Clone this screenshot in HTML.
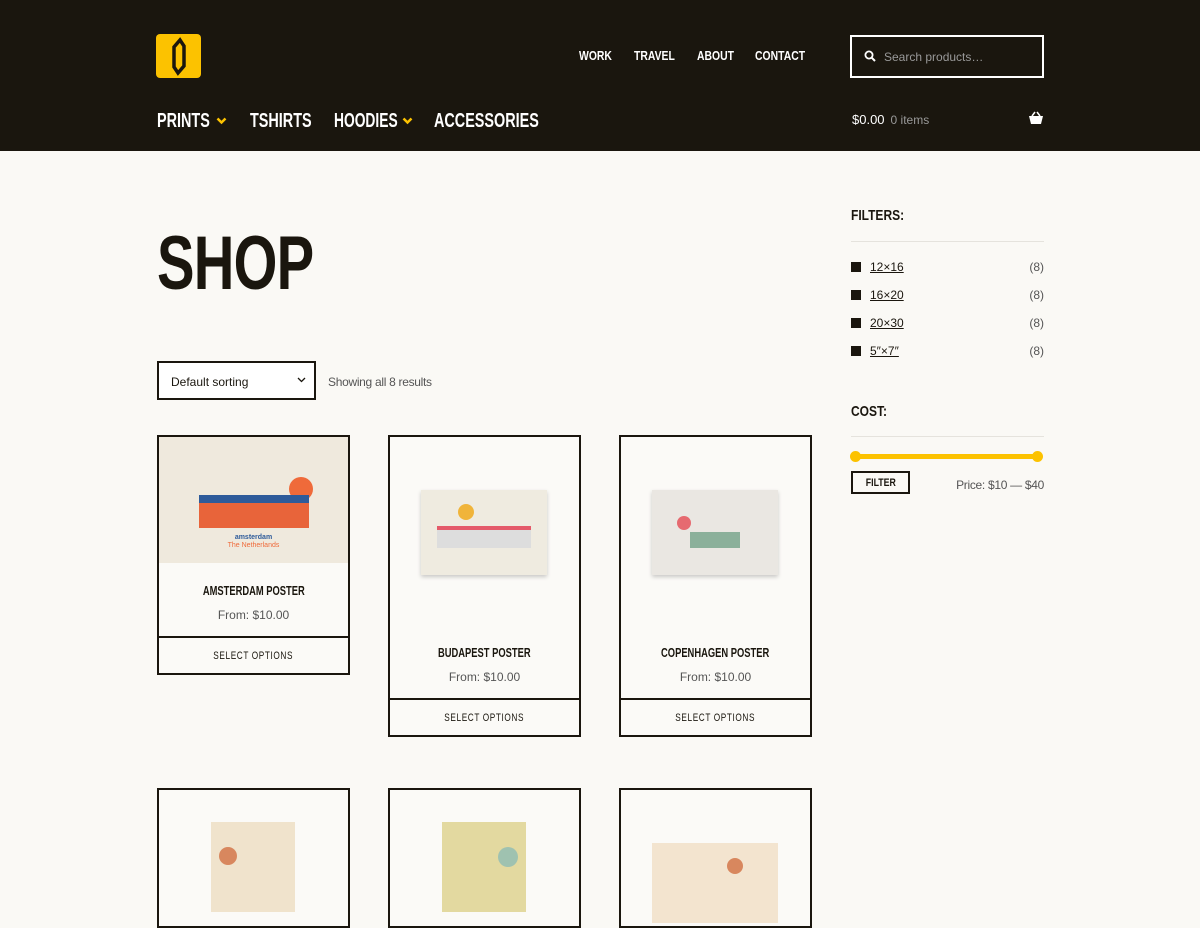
<!DOCTYPE html>
<html><head><meta charset="utf-8"><style>
*{box-sizing:border-box;margin:0;padding:0}
body{width:1200px;height:900px;overflow:hidden;background:#faf9f5;font-family:"Liberation Sans",sans-serif;color:#1a160e}
.c{font-weight:bold;display:inline-block;transform:scaleX(.72);transform-origin:left center;white-space:nowrap}
.cc{font-weight:bold;display:inline-block;transform:scaleX(.72);transform-origin:center center;white-space:nowrap}
header{position:absolute;left:0;top:0;width:1200px;height:151px;background:#1a160e}
.logo{position:absolute;left:156px;top:34px;width:45px;height:44px;background:#fcc200;border-radius:4px}
.top{position:absolute;top:48px;color:#fff;font-size:13px;transform:scaleX(.8);transform-origin:left center;white-space:nowrap}
.search{position:absolute;left:850px;top:35px;width:194px;height:43px;border:2px solid #fff;background:#1a160e;color:#999;font-size:12px;padding:13px 0 0 32px}
.nav{position:absolute;top:110px;color:#fff;font-size:20px}
.chev{position:absolute;top:117px}
.cart{position:absolute;left:852px;top:112px;color:#fff;font-size:13px}
.cart small{color:#999;font-size:12px;margin-left:6px}
h1{position:absolute;left:157px;top:226px;font-size:76px;letter-spacing:-1px;line-height:1}
.sort{position:absolute;left:157px;top:361px;width:159px;height:39px;border:2px solid #1a160e;font-size:12px;padding:12px 0 0 12px;background:#fff}
.res{position:absolute;left:328px;top:375px;font-size:12px;color:#555;letter-spacing:-0.3px}
.card{position:absolute;width:193px;border:2px solid #1a160e;background:#fbfaf7}
.card .t{position:absolute;left:0;right:0;text-align:center;font-size:13px}
.card .p{position:absolute;left:0;right:0;text-align:center;font-size:12px;color:#555}
.card .b{position:absolute;left:-2px;right:-2px;bottom:-2px;height:39px;border:2px solid #1a160e;text-align:center;font-size:11px;padding-top:12px;letter-spacing:0.8px}
.card .b span{display:inline-block;transform:scaleX(.75);white-space:nowrap}
.side h3{position:absolute;left:851px;font-size:15px;transform:scaleX(.8);transform-origin:left}
.line{position:absolute;left:851px;width:193px;height:1px;background:#e5e3dd}
.f{position:absolute;left:851px;width:193px;font-size:12px}
.f i{display:inline-block;width:10px;height:10px;background:#1a160e;margin-right:9px;vertical-align:-1px}
.f u{text-decoration:underline}
.f b{float:right;font-weight:normal;color:#555}
</style></head><body>
<header>
<div class="logo"><svg width="45" height="44" viewBox="0 0 45 44"><path d="M18 13 L24 6 L28 12 L28 32 L22 39 L18 33 Z" fill="none" stroke="#1a160e" stroke-width="3.5"/></svg></div>
<div class="top" style="left:579px;font-weight:bold">WORK</div>
<div class="top" style="left:634px;font-weight:bold">TRAVEL</div>
<div class="top" style="left:697px;font-weight:bold">ABOUT</div>
<div class="top" style="left:755px;font-weight:bold">CONTACT</div>
<div class="search"><svg style="position:absolute;left:12px;top:13px" width="12" height="12" viewBox="0 0 12 12"><circle cx="5" cy="5" r="3.6" fill="none" stroke="#fff" stroke-width="1.8"/><path d="M7.6 7.6L11 11" stroke="#fff" stroke-width="2"/></svg>Search products…</div>
<div class="nav" style="left:157px"><span class="c">PRINTS</span></div>
<svg class="chev" style="left:216px" width="11" height="8" viewBox="0 0 11 8"><path d="M1.5 1.5L5.5 5.5L9.5 1.5" fill="none" stroke="#fcc200" stroke-width="2.5"/></svg>
<div class="nav" style="left:250px"><span class="c">TSHIRTS</span></div>
<div class="nav" style="left:334px"><span class="c" style="transform:scaleX(.69)">HOODIES</span></div>
<svg class="chev" style="left:402px" width="11" height="8" viewBox="0 0 11 8"><path d="M1.5 1.5L5.5 5.5L9.5 1.5" fill="none" stroke="#fcc200" stroke-width="2.5"/></svg>
<div class="nav" style="left:434px"><span class="c">ACCESSORIES</span></div>
<div class="cart">$0.00<small>0 items</small></div>
<svg style="position:absolute;left:1028px;top:111px" width="16" height="14" viewBox="0 0 16 14"><path d="M1 5H15L13 13H3Z" fill="#fff"/><path d="M4 5L7 1M12 5L9 1" stroke="#fff" stroke-width="1.5"/></svg>
</header>
<h1><span class="c" style="transform:scaleX(.74)">SHOP</span></h1>
<div class="sort">Default sorting<svg style="position:absolute;right:8px;top:14px" width="9" height="6" viewBox="0 0 9 6"><path d="M1 1L4.5 4.5L8 1" fill="none" stroke="#1a160e" stroke-width="1.3"/></svg></div>
<div class="res">Showing all 8 results</div>

<div class="card" style="left:157px;top:435px;height:240px">
<div style="position:absolute;left:0;top:0;width:189px;height:126px;background:#efe9dd">
<div style="position:absolute;left:130px;top:40px;width:24px;height:24px;border-radius:50%;background:#ef6a3a"></div>
<div style="position:absolute;left:40px;top:63px;width:110px;height:28px;background:#e8643a"></div>
<div style="position:absolute;left:40px;top:58px;width:110px;height:8px;background:#2e5b9a"></div>
<div style="position:absolute;left:0;right:0;top:97px;text-align:center;font-size:7px;color:#2e5b9a;font-weight:bold">amsterdam</div>
<div style="position:absolute;left:0;right:0;top:105px;text-align:center;font-size:7px;color:#ef6a3a">The Netherlands</div>
</div>
<div class="t" style="top:146px"><span class="cc">AMSTERDAM POSTER</span></div><div class="p" style="top:171px">From: $10.00</div>
<div class="b"><span>SELECT OPTIONS</span></div></div>

<div class="card" style="left:388px;top:435px;height:302px">
<div style="position:absolute;left:31px;top:53px;width:126px;height:85px;background:#efebe0;box-shadow:0 2px 4px rgba(0,0,0,.2)">
<div style="position:absolute;left:37px;top:14px;width:16px;height:16px;border-radius:50%;background:#f0b43a"></div>
<div style="position:absolute;left:16px;top:36px;width:94px;height:22px;background:#ddd;border-top:4px solid #e45a6a"></div></div>
<div class="t" style="top:208px"><span class="cc">BUDAPEST POSTER</span></div><div class="p" style="top:233px">From: $10.00</div>
<div class="b"><span>SELECT OPTIONS</span></div></div>

<div class="card" style="left:619px;top:435px;height:302px">
<div style="position:absolute;left:31px;top:53px;width:126px;height:85px;background:#eae7e2;box-shadow:0 2px 4px rgba(0,0,0,.2)">
<div style="position:absolute;left:25px;top:26px;width:14px;height:14px;border-radius:50%;background:#e66a70"></div>
<div style="position:absolute;left:38px;top:42px;width:50px;height:16px;background:#8bb09a"></div></div>
<div class="t" style="top:208px"><span class="cc">COPENHAGEN POSTER</span></div><div class="p" style="top:233px">From: $10.00</div>
<div class="b"><span>SELECT OPTIONS</span></div></div>

<div class="card" style="left:157px;top:788px;height:140px"><div style="position:absolute;left:52px;top:32px;width:84px;height:90px;background:#f0e3cc"><div style="position:absolute;left:8px;top:25px;width:18px;height:18px;border-radius:50%;background:#d8875e"></div></div></div>
<div class="card" style="left:388px;top:788px;height:140px"><div style="position:absolute;left:52px;top:32px;width:84px;height:90px;background:#e3d9a0"><div style="position:absolute;left:56px;top:25px;width:20px;height:20px;border-radius:50%;background:#9fc2b0"></div></div></div>
<div class="card" style="left:619px;top:788px;height:140px"><div style="position:absolute;left:31px;top:53px;width:126px;height:80px;background:#f3e4cf"><div style="position:absolute;left:75px;top:15px;width:16px;height:16px;border-radius:50%;background:#d8875e"></div></div></div>

<div class="side">
<h3 style="top:207px">FILTERS:</h3>
<div class="line" style="top:241px"></div>
<div class="f" style="top:260px"><i></i><u>12×16</u><b>(8)</b></div>
<div class="f" style="top:288px"><i></i><u>16×20</u><b>(8)</b></div>
<div class="f" style="top:316px"><i></i><u>20×30</u><b>(8)</b></div>
<div class="f" style="top:344px"><i></i><u>5″×7″</u><b>(8)</b></div>
<h3 style="top:403px">COST:</h3>
<div class="line" style="top:436px"></div>
<div style="position:absolute;left:855px;top:454px;width:183px;height:5px;background:#fcc200"></div>
<div style="position:absolute;left:850px;top:451px;width:11px;height:11px;border-radius:50%;background:#fcc200"></div>
<div style="position:absolute;left:1032px;top:451px;width:11px;height:11px;border-radius:50%;background:#fcc200"></div>
<div style="position:absolute;left:851px;top:471px;width:59px;height:23px;border:2px solid #1a160e;font-size:11px;text-align:center;padding-top:4px"><span class="cc" style="transform:scaleX(.8)">FILTER</span></div>
<div style="position:absolute;right:156px;top:478px;font-size:12px;color:#555;letter-spacing:-0.3px">Price: $10 — $40</div>
</div>
</body></html>
